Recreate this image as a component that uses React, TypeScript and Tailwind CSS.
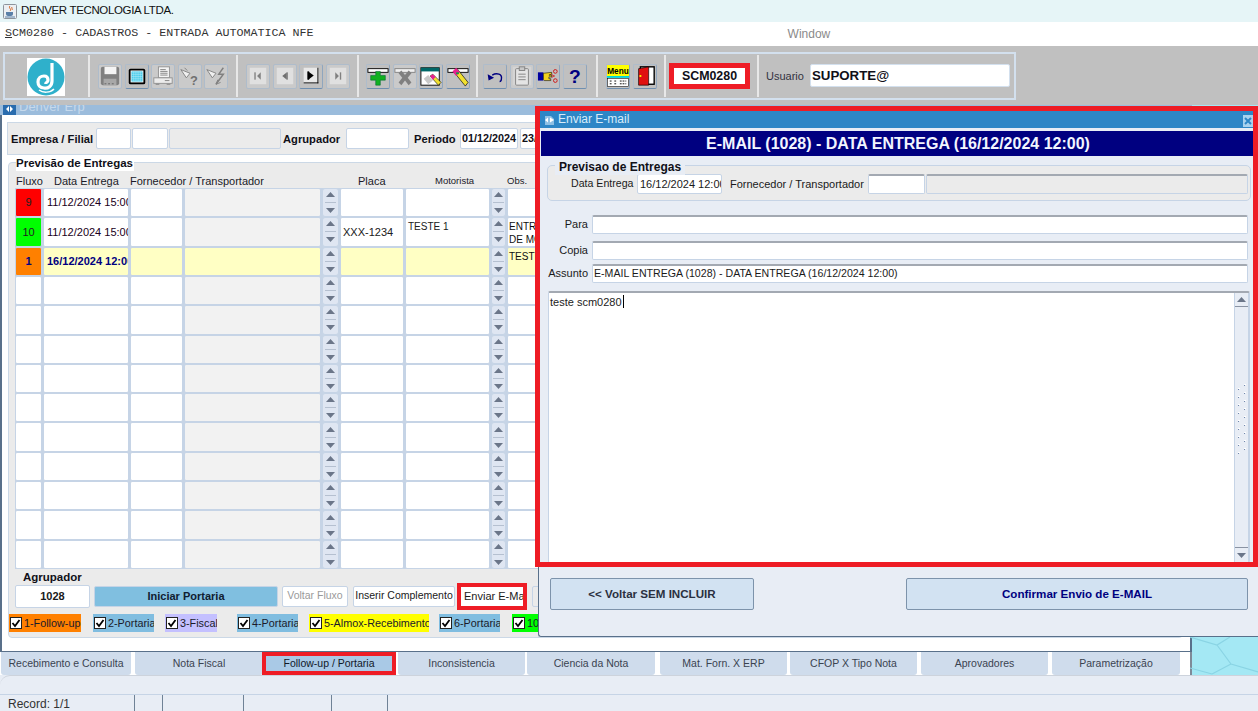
import { ReactNode } from "react";

type IconName =
  | "save" | "monitor" | "print" | "help" | "bolt"
  | "first" | "prev" | "next" | "last"
  | "plus" | "cross" | "win" | "pencil"
  | "undo" | "clip" | "hand" | "question" | "menu" | "door";

const icons: Record<IconName, ReactNode> = {
  save: (
    <>
      <rect x="2" y="2" width="20" height="20" rx="2" fill="#808080" />
      <rect x="6" y="2" width="13" height="8" fill="#f4f4f4" />
      <rect x="5" y="15" width="14" height="7" fill="#a8a8a8" />
      <path d="M6 20.5h2M10 20.5h2M14 20.5h2" stroke="#606060" />
    </>
  ),
  monitor: (
    <>
      <rect x="3" y="4" width="18" height="17" rx="2" fill="#000" />
      <rect x="5" y="6" width="14" height="13" fill="#fff" />
      <rect x="6" y="7" width="12" height="11" fill="#30c4e8" />
      <path d="M6 8.5h12M6 10.5h12M6 12.5h12M6 14.5h12M6 16.5h12M8 7v11M10 7v11M12 7v11M14 7v11M16 7v11" stroke="#b8ecf8" strokeWidth="0.6" />
    </>
  ),
  print: (
    <>
      <rect x="7" y="2" width="12" height="12" fill="#f4f4f4" stroke="#909090" />
      <path d="M9 5h6M9 7h8M9 9h8M9 11h8" stroke="#808080" />
      <rect x="2" y="14" width="20" height="6" fill="#ececec" stroke="#909090" />
      <path d="M14 17h5" stroke="#808080" />
      <path d="M4 21h4M16 21h4" stroke="#808080" />
    </>
  ),
  help: (
    <>
      <path d="M2 5l10 4-4 5z" fill="#f0f0f0" stroke="#808080" />
      <path d="M6 3l3 3" stroke="#808080" />
      <text x="12" y="22" fontSize="14" fontWeight="700" fill="#707070" fontFamily="Liberation Sans, sans-serif">?</text>
    </>
  ),
  bolt: (
    <>
      <path d="M2 5l10 4-4 5z" fill="#f0f0f0" stroke="#808080" />
      <path d="M20 3l-5 7h5l-8 11" fill="none" stroke="#808080" strokeWidth="1.6" />
      <path d="M14 16l-2 5 5-2" fill="none" stroke="#808080" />
    </>
  ),
  first: (
    <>
      <rect x="3" y="3" width="18" height="18" fill="#e0e0e0" />
      <rect x="8" y="8" width="1.5" height="8" fill="#808080" />
      <path d="M15 8v8l-4-4z" fill="#808080" />
    </>
  ),
  prev: (
    <>
      <rect x="3" y="3" width="18" height="18" fill="#e0e0e0" />
      <path d="M14 8v8l-5-4z" fill="#707070" />
      <rect x="14" y="8" width="1" height="8" fill="#707070" />
    </>
  ),
  next: (
    <>
      <rect x="4" y="3" width="16" height="17" fill="#e8e8e8" />
      <path d="M9 7v9l6-4.5z" fill="#000" />
      <rect x="8" y="7" width="2" height="9" fill="#000" />
      <path d="M4 19.5h16M19.5 3v17" stroke="#000" />
    </>
  ),
  last: (
    <>
      <rect x="3" y="3" width="18" height="18" fill="#e0e0e0" />
      <path d="M9 8v8l4-4z" fill="#808080" />
      <rect x="14" y="8" width="1.5" height="8" fill="#808080" />
    </>
  ),
  plus: (
    <>
      <rect x="1" y="4" width="22" height="4" fill="#fff" stroke="#000" />
      <path d="M9.5 7h5v4.5H20v5h-5.500V22h-5v-5.500H4v-5h5.500z" fill="#10b020" stroke="#063" strokeWidth="0.6" />
    </>
  ),
  cross: (
    <>
      <rect x="1" y="4" width="22" height="4" fill="#f0f0f0" stroke="#808080" />
      <path d="M5 9l3-3 4 5 4-5 3 3-4 5 4 5-3 3-4-5-4 5-3-3 4-5z" fill="#808080" />
    </>
  ),
  win: (
    <>
      <rect x="1" y="3" width="20" height="19" fill="#fff" stroke="#000" />
      <rect x="1" y="3" width="20" height="4" fill="#006868" />
      <path d="M4 15l5-4 5 6-5 4z" fill="#c8c8c8" />
      <path d="M11 12l3-2 9 9-3 3z" fill="#f0e030" stroke="#000" strokeWidth="0.6" />
      <path d="M11 12l3-2 3 3-3 3z" fill="#e82090" />
    </>
  ),
  pencil: (
    <>
      <rect x="1" y="4" width="22" height="4" fill="#fff" stroke="#000" />
      <path d="M7 7l4-3 12 15-3 4z" fill="#f0e030" stroke="#000" strokeWidth="0.7" />
      <path d="M6 7l4-4 4 5-4 4z" fill="#e82090" />
      <rect x="10" y="8" width="3" height="2" fill="#10a040" />
    </>
  ),
  undo: (
    <>
      <path d="M9 11c5-3 11-1 10 4 0 2-1 3-2 3" fill="none" stroke="#000080" strokeWidth="1.5" />
      <path d="M4 10l1 7 6-3z" fill="#000080" />
    </>
  ),
  clip: (
    <>
      <rect x="2" y="2" width="20" height="20" fill="#d4d4d4" />
      <rect x="5" y="4" width="14" height="18" rx="1" fill="#e4e4e4" stroke="#808080" />
      <rect x="9" y="2" width="6" height="4" fill="#c8c8c8" stroke="#808080" />
      <path d="M8 10h8M8 13h8M8 16h8" stroke="#808080" />
    </>
  ),
  hand: (
    <>
      <rect x="1" y="8" width="6" height="9" fill="#0000a0" />
      <path d="M7 9l9-1v2l-3 1h3v2h-3v2h2v2H8l-1-1z" fill="#f0d020" stroke="#000" strokeWidth="0.6" />
      <circle cx="20" cy="7" r="2" fill="none" stroke="#d01010" />
      <circle cx="20" cy="17" r="2" fill="none" stroke="#d01010" />
      <path d="M16 10l3 3M16 14l3-3" stroke="#d01010" />
    </>
  ),
  question: (
    <text x="12" y="20" textAnchor="middle" fontSize="21" fontWeight="700" fill="#000080" fontFamily="Liberation Sans, sans-serif">?</text>
  ),
  menu: (
    <>
      <rect x="0" y="0" width="24" height="12" fill="#ffff00" />
      <text x="12" y="10" textAnchor="middle" fontSize="9" fontWeight="700" fill="#000" fontFamily="Liberation Sans, sans-serif">Menu</text>
      <rect x="0" y="12" width="24" height="2" fill="#00d8d8" />
      <rect x="0.5" y="14.500" width="23" height="9" fill="#fff" stroke="#000" strokeWidth="0.6" />
      <path d="M3 17.500h3M8 17.500h3M14 17.500h7M3 20.500h3M8 20.500h3M14 20.500h7" stroke="#000" strokeDasharray="2 1" />
    </>
  ),
  door: (
    <>
      <rect x="7" y="2" width="15" height="19" fill="#fff" stroke="#000" strokeWidth="1.5" />
      <path d="M5 4l11-2v20H5z" fill="#e01010" stroke="#000" strokeWidth="0.7" />
      <rect x="6" y="11" width="2" height="2" fill="#ffff00" />
    </>
  ),
};

function ToolButton({ icon, off }: { icon: IconName; off?: boolean }) {
  return (
    <div
      className={
        off
          ? "flex h-[25px] w-[24px] shrink-0 items-center justify-center rounded-[2px] border border-[#aebccb] bg-[#cacaca]"
          : "flex h-[25px] w-[24px] shrink-0 items-center justify-center rounded-[2px] border border-[#aebccb] border-b-[#6f8fb0] border-r-[#8fa6be] bg-[#c0c0c0]"
      }
    >
      <svg viewBox="0 0 24 24" className="h-[22px] w-[22px]">
        {icons[icon]}
      </svg>
    </div>
  );
}

function ToolGroup({ className, items }: { className: string; items: [IconName, boolean?][] }) {
  return (
    <div className={"flex h-full shrink-0 items-center gap-[2.5px] border-r-2 border-[#e8e8e8] " + className}>
      {items.map(([icon, off]) => (
        <ToolButton key={icon} icon={icon} off={off} />
      ))}
    </div>
  );
}

function Field({ className, children }: { className: string; children?: ReactNode }) {
  return (
    <div className={"flex shrink-0 items-center overflow-hidden whitespace-nowrap rounded-[2px] border border-[#c6d4e6] " + className}>
      {children}
    </div>
  );
}

function SunkenField({ className, children }: { className: string; children?: ReactNode }) {
  return (
    <div className={"flex items-center overflow-hidden whitespace-nowrap rounded-[2px] border border-[#c6d4e6] border-t-2 border-t-[#a3a9b2] " + className}>
      {children}
    </div>
  );
}

function Arrow({ up }: { up?: boolean }) {
  return (
    <svg viewBox="0 0 9 5" className="h-[5px] w-[9px]">
      <path d={up ? "M0 5L4.5 0L9 5z" : "M0 0L9 0L4.5 5z"} fill="#6b7689" />
    </svg>
  );
}

function Spinner() {
  return (
    <div className="flex h-full flex-col items-center justify-center gap-[5px] rounded-[3px] border border-[#c6d4e6] bg-[#dfe6f2]">
      <Arrow up />
      <div className="h-px w-[11px] bg-[#b5c0d0]" />
      <Arrow />
    </div>
  );
}

type Row = {
  flow?: string;
  flowColor?: string;
  date?: string;
  placa?: string;
  driver?: string;
  obs?: string;
  active?: boolean;
};

const rows: Row[] = [
  { flow: "9", flowColor: "bg-[#ff0000]", date: "11/12/2024 15:00" },
  { flow: "10", flowColor: "bg-[#00ff00]", date: "11/12/2024 15:00", placa: "XXX-1234", driver: "TESTE 1", obs: "ENTREGA\nDE MOVEIS" },
  { flow: "1", flowColor: "bg-[#ff8000]", date: "16/12/2024 12:00", obs: "TESTE", active: true },
  {}, {}, {}, {}, {}, {}, {}, {}, {}, {},
];

function GridRow({ row }: { row: Row }) {
  const fill = row.active ? "bg-[#ffffc4]" : "bg-white";
  const cell = "h-full overflow-hidden whitespace-nowrap rounded-[2px] border border-[#c6d4e6] ";
  return (
    <>
      <div className={cell + "flex items-center justify-center text-[11px] " + (row.flowColor ?? "bg-white") + (row.active ? " font-bold text-[#000080]" : " text-[#202020]")}>
        {row.flow}
      </div>
      <div className={cell + "flex items-center pl-[3px] text-[11px] " + fill + (row.active ? " font-bold text-[#000080]" : " text-[#200020]")}>
        {row.date}
      </div>
      <div className={cell + fill} />
      <div className={cell + (row.active ? "bg-[#ffffc4]" : "bg-[#f2f2f2]")} />
      <Spinner />
      <div className={cell + "flex items-center pl-[2px] text-[11px] text-[#202020] " + fill}>{row.placa}</div>
      <div className={cell + "pl-[2px] pt-[2px] text-[10px] leading-[13px] text-[#202020] " + fill}>{row.driver}</div>
      <Spinner />
      <div className={cell + "whitespace-pre pl-[1px] pt-[2px] text-[10px] leading-[13px] text-[#101010] " + fill}>{row.obs}</div>
    </>
  );
}

const flags = [
  { label: "1-Follow-up", className: "w-[72px] bg-[#ff8000]" },
  { label: "2-Portaria", className: "ml-[12px] w-[61px] bg-[#80bde0]" },
  { label: "3-Fiscal", className: "ml-[11px] w-[52px] bg-[#c4c0ff]" },
  { label: "4-Portaria", className: "ml-[20px] w-[61px] bg-[#80bde0]" },
  { label: "5-Almox-Recebimento", className: "ml-[11px] w-[120px] bg-[#ffff00]" },
  { label: "6-Portaria", className: "ml-[10px] w-[61px] bg-[#80bde0]" },
  { label: "10-Finalizado", className: "ml-[12px] w-[80px] bg-[#00ff00]" },
];

const tabs = [
  { label: "Recebimento e Consulta", className: "ml-[1px] w-[130px]" },
  { label: "Nota Fiscal", className: "ml-[4px] w-[128px]" },
  { label: "Follow-up / Portaria", className: "ml-[-1px] w-[134px] border-[4px] border-[#ee1c25] bg-[#a9c9e6] text-[#101828]", active: true },
  { label: "Inconsistencia", className: "ml-[2px] w-[127px]" },
  { label: "Ciencia da Nota", className: "ml-[2px] w-[128px]" },
  { label: "Mat. Forn. X ERP", className: "ml-[5px] w-[127px]" },
  { label: "CFOP X Tipo Nota", className: "ml-[3px] w-[127px]" },
  { label: "Aprovadores", className: "ml-[4px] w-[127px]" },
  { label: "Parametrização", className: "ml-[4px] w-[128px]" },
];

function Check({ className, label }: { className: string; label: string }) {
  return (
    <div className={"flex h-[18px] shrink-0 items-center gap-[1px] overflow-hidden whitespace-nowrap pl-px text-[10.8px] text-[#1a1a2a] " + className}>
      <svg viewBox="0 0 12 12" className="h-[12px] w-[12px] shrink-0">
        <rect x="0.5" y="0.5" width="11" height="11" fill="#fff" stroke="#222" />
        <path d="M2.5 6l2.5 3 4.5-6" fill="none" stroke="#000" strokeWidth="1.8" />
      </svg>
      <span className="pl-px">{label}</span>
    </div>
  );
}

function Grip() {
  const rowsY = [0, 8, 16, 24, 32, 40, 48, 56, 64];
  return (
    <svg viewBox="0 0 9 70" className="h-[70px] w-[9px]">
      {rowsY.map((y) => (
        <g key={y}>
          <rect x="7" y={y} width="2" height="1" fill="#fff" />
          <rect x="7" y={y + 1} width="1" height="1" fill="#6f86ac" />
          <rect x="1" y={y + 4} width="2" height="1" fill="#fff" />
          <rect x="1" y={y + 5} width="1" height="1" fill="#6f86ac" />
        </g>
      ))}
    </svg>
  );
}

export default function App() {
  return (
    <div className="flex h-[711px] w-[1258px] flex-col overflow-hidden bg-[#e8edf5] font-['Liberation_Sans',Arial,sans-serif] text-[11px] text-[#1a1a1a]">
      {/* java frame title */}
      <div className="flex h-[22px] shrink-0 items-center gap-[4px] bg-[#e6f5f7] pl-[3px]">
        <svg viewBox="0 0 14 15" className="h-[15px] w-[14px]">
          <rect x="0.5" y="0.5" width="13" height="14" rx="1" fill="#eceff2" stroke="#8c949c" />
          <path d="M7 2c-2 2 2 3 0 5M9 3c-1 1 1 2 0 3" fill="none" stroke="#d86018" />
          <path d="M3 8h7v2c0 1-1 2-2 2H5c-1 0-2-1-2-2z" fill="#5a80a8" />
          <path d="M2 13h10" stroke="#5a80a8" />
        </svg>
        <span className="text-[11.5px] tracking-[-0.35px] text-[#111]">DENVER TECNOLOGIA LTDA.</span>
      </div>

      {/* menu bar */}
      <div className="relative flex h-[24px] shrink-0 items-center bg-white pl-[5px] font-['Liberation_Mono',monospace] text-[11.7px] text-[#333]">
        <span>
          <span className="underline">S</span>CM0280 - CADASTROS - ENTRADA AUTOMATICA NFE
        </span>
        <span className="ml-[474px] font-['Liberation_Sans',sans-serif] text-[12px] text-[#8a8a8a]">Window</span>
      </div>

      {/* toolbar */}
      <div className="relative z-10 h-[59px] shrink-0 bg-[#c0c0c0] pl-[3px] pt-[6px]">
        <div className="flex h-[48px] w-[1013px] items-center border-2 border-[#d3e0ee] py-[1px]">
          <div className="flex h-full w-[85px] shrink-0 items-start border-r-2 border-[#e8e8e8] pl-[22px]">
            <div className="mt-[3px] h-[38px] w-[38px] bg-white">
              <svg viewBox="0 0 38 38" className="h-[38px] w-[38px]">
                <circle cx="19" cy="19" r="18.5" fill="#2fb0cb" />
                <path d="M25 5v18c0 5-4 8-8 7-4 0-6-3-6-6 0-4 3-6 6-6 3 0 4 2 4 4 0 2-2 3-3 2" fill="none" stroke="#fff" strokeWidth="3.2" />
                <path d="M12 32c4 3 11 3 15-1" fill="none" stroke="#fff" strokeWidth="1.5" />
              </svg>
            </div>
          </div>
          <ToolGroup className="w-[148px] pl-[8px]" items={[["save", true], ["monitor"], ["print", true], ["help", true], ["bolt", true]]} />
          <ToolGroup className="w-[121px] pl-[8px]" items={[["first", true], ["prev", true], ["next"], ["last", true]]} />
          <ToolGroup className="w-[119px] pl-[7px]" items={[["plus"], ["cross", true], ["win"], ["pencil"]]} />
          <ToolGroup className="w-[120px] pl-[5px]" items={[["undo"], ["clip", true], ["hand"], ["question"]]} />
          <ToolGroup className="w-[68px] pl-[8px]" items={[["menu"], ["door"]]} />
          <div className="flex h-full w-[93px] shrink-0 items-center border-r-2 border-[#e8e8e8] pl-[3px]">
            <div className="flex h-[26px] w-[81px] items-center justify-center border-[5px] border-[#ee1c25] bg-white text-[12.4px] font-bold text-[#101018]">
              SCM0280
            </div>
          </div>
          <span className="ml-[7px] text-[11px] text-[#333340]">Usuario</span>
          <div className="ml-[6px] mt-[-1px] flex h-[23px] w-[200px] items-center rounded-[2px] border border-[#d3e0ee] bg-white pl-[1px] text-[13.3px] font-bold text-[#101018]">
            SUPORTE@
          </div>
        </div>
      </div>

      {/* mdi desktop */}
      <div className="relative h-[570px] shrink-0 overflow-hidden bg-[#a4e8f4]">
        <svg viewBox="0 0 68 45" className="absolute left-[1190px] top-[525px] h-[45px] w-[68px]">
          <path d="M0 7l27 8 13-8M27 15l14 19 27 8M41 34l-19 10M0 38l22 6" fill="none" stroke="#8ad4e4" strokeWidth="1.2" />
        </svg>

        {/* main form window */}
        <div className="flex h-[570px] w-[1192px] flex-col overflow-hidden">
          <div className="flex h-[10px] shrink-0 items-start overflow-hidden bg-[#9bbcdc] pl-[3px]">
            <svg viewBox="0 0 13 10" className="h-[10px] w-[13px]">
              <rect width="13" height="10" fill="#2a6cae" />
              <path d="M3 4l3-3v6zM10 4L7 1v6z" fill="#fff" />
            </svg>
            <span className="ml-[3px] mt-[-6px] text-[13px] leading-[16px] text-[#c6d9ec]">Denver Erp</span>
          </div>

          <div className="flex h-[537px] shrink-0 flex-col border-x-2 border-b border-[#59708a] bg-white pl-[5px] pt-[7px]">
            <div className="flex h-[33px] w-[1176px] shrink-0 items-center border border-[#cbd8e6] bg-[#ebebeb] pl-[3px] font-bold text-[#101018]">
              <span className="w-[82px] whitespace-nowrap pt-px text-[11.2px]">Empresa / Filial</span>
              <Field className="ml-[3px] h-[21px] w-[35px] bg-white" />
              <Field className="ml-[1px] h-[21px] w-[36px] bg-white" />
              <Field className="ml-[1px] h-[21px] w-[112px] bg-[#ebebeb]" />
              <span className="ml-[2px] w-[59px] whitespace-nowrap pt-px text-[11.2px]">Agrupador</span>
              <Field className="ml-[4px] h-[21px] w-[63px] bg-white" />
              <span className="ml-[5px] w-[42px] pt-px text-[11.2px]">Periodo</span>
              <Field className="ml-[4px] h-[21px] w-[58px] justify-center bg-white text-[10.8px]">01/12/2024</Field>
              <Field className="ml-[2px] h-[21px] w-[60px] bg-white pl-[1px] text-[10.8px]">23/12/2024</Field>
            </div>

            <div className="relative ml-[1px] mt-[7px] flex h-[476px] w-[1175px] shrink-0 flex-col rounded-[4px] border border-[#cbd8e6] bg-[#ebebeb] pl-[6px] pt-[11px]">
              <div className="absolute left-[7px] top-[-8px] bg-white pr-[1px] text-[11.5px] font-bold leading-[16px] text-[#101018]">
                Previsão de Entregas
              </div>

              <div className="grid h-[14px] shrink-0 grid-cols-[27px_86px_53px_137px_17px_64px_85px_15px_1fr] items-center gap-x-px whitespace-nowrap text-[11px] leading-[14px] text-[#1a1a28]">
                <span className="pl-[1px]">Fluxo</span>
                <span className="pl-[11px]">Data Entrega</span>
                <span className="col-span-2">Fornecedor / Transportador</span>
                <span />
                <span className="pl-[18px]">Placa</span>
                <span className="pl-[30px] text-[9.5px]">Motorista</span>
                <span />
                <span className="text-[9.5px]">Obs.</span>
              </div>

              <div className="grid h-[381px] shrink-0 grid-cols-[27px_86px_53px_137px_17px_64px_85px_15px_1fr] grid-rows-[repeat(13,1fr)] gap-x-px bg-[#c6d4e6]">
                {rows.map((row, i) => (
                  <GridRow key={i} row={row} />
                ))}
              </div>

              <div className="h-[15px] shrink-0 pl-[8px] text-[11.5px] font-bold leading-[17px] text-[#101018]">Agrupador</div>

              <div className="flex h-[24px] shrink-0 items-center text-[11px]">
                <Field className="h-[23px] w-[75px] justify-center bg-white font-bold">1028</Field>
                <Field className="ml-[4px] h-[21px] w-[184px] justify-center bg-[#80bfe0] font-bold text-[#102030]">Iniciar Portaria</Field>
                <Field className="ml-[4px] h-[21px] w-[66px] justify-center bg-white text-[10.5px] text-[#9a9a9a]">Voltar Fluxo</Field>
                <Field className="ml-[5px] h-[21px] w-[102px] justify-center bg-white text-[10.5px]">Inserir Complemento</Field>
                <div className="ml-[2px] flex h-[27px] w-[70px] shrink-0 items-center overflow-hidden whitespace-nowrap border-[4px] border-[#ee1c25] bg-white pl-[3px]">
                  Enviar E-Mail
                </div>
                <Field className="ml-[5px] h-[21px] w-[70px] bg-[#ebebeb]" />
              </div>

              <div className="ml-[-6px] mt-[6px] flex shrink-0 items-center">
                {flags.map((f) => (
                  <Check key={f.label} className={f.className} label={f.label} />
                ))}
              </div>
            </div>
          </div>

          <div className="flex h-[23px] shrink-0 border-r-2 border-[#7f8a98] bg-white">
            {tabs.map((t) => (
              <div
                key={t.label}
                className={
                  t.active
                    ? "flex shrink-0 items-center justify-center whitespace-nowrap text-[10.5px] " + t.className
                    : "flex shrink-0 items-center justify-center whitespace-nowrap rounded-b-[3px] bg-[#cfdcec] text-[10.5px] text-[#3a4350] " + t.className
                }
              >
                {t.label}
              </div>
            ))}
          </div>
        </div>

        {/* enviar e-mail dialog */}
        <div className="absolute left-[538px] top-[3px] flex h-[529px] w-[720px] flex-col rounded-bl-[3px] border-b border-l border-[#59708a] bg-[#e8edf5]">
          <div className="flex h-[20px] shrink-0 items-end justify-between bg-[#2e86c6] pb-[1px] pl-[5px] pr-[5px] text-[12px] text-[#d8ecfa]">
            <div className="flex items-center gap-[3px]">
              <svg viewBox="0 0 11 12" className="h-[12px] w-[11px]">
                <path d="M1 2h6l3 3v6H1z" fill="#8fc0e4" />
                <path d="M1 6l3-2.500v5zM10 6L6 3.500v5z" fill="#fff" />
              </svg>
              <span className="leading-[15px]">Enviar E-mail</span>
            </div>
            <svg viewBox="0 0 10 12" className="h-[12px] w-[10px]">
              <rect width="10" height="12" fill="#a9d2ee" />
              <path d="M2 3l6 6M8 3l-6 6" stroke="#2e86c6" strokeWidth="2" />
            </svg>
          </div>
          <div className="ml-[2px] mt-[3px] flex h-[25px] shrink-0 items-center justify-center bg-[#000080] pr-[3px] pt-[1px] text-[16px] font-bold text-[#f2f5ff]">
            E-MAIL (1028) - DATA ENTREGA (16/12/2024 12:00)
          </div>

          <div className="relative ml-[8px] mr-[7px] mt-[9px] flex h-[36px] shrink-0 items-center rounded-[5px] border border-[#c6d4e6] bg-[#ebebeb] pl-[23px] pt-[2px]">
            <div className="absolute left-[7px] top-[-7px] bg-[#e8edf5] pl-[4px] pr-[4px] text-[12px] font-bold leading-[16px] text-[#101018]">
              Previsao de Entregas
            </div>
            <span className="w-[62px] whitespace-nowrap text-[10.6px]">Data Entrega</span>
            <Field className="ml-[4px] h-[20px] w-[85px] bg-white pl-[2px] text-[11px]">16/12/2024 12:00</Field>
            <span className="ml-[8px] w-[134px] whitespace-nowrap">Fornecedor / Transportador</span>
            <SunkenField className="ml-[4px] h-[20px] w-[57px] bg-white" />
            <SunkenField className="ml-px h-[20px] w-[322px] bg-[#ebebeb]" />
          </div>

          <div className="mt-[14px] grid shrink-0 grid-cols-[41px_1fr] items-center gap-x-[4px] pl-[8px] pr-[10px]">
            <span className="text-right">Para</span>
            <SunkenField className="h-[19px] bg-white" />
            <span className="mt-[7px] text-right">Copia</span>
            <SunkenField className="mt-[7px] h-[19px] bg-white" />
            <span className="mt-[4px] text-right">Assunto</span>
            <SunkenField className="mt-[4px] h-[19px] bg-white pl-[1px] text-[10.6px]">
              E-MAIL ENTREGA (1028) - DATA ENTREGA (16/12/2024 12:00)
            </SunkenField>
          </div>

          <div className="ml-[9px] mr-[8px] mt-[8px] flex h-[272px] shrink-0 rounded-[2px] border border-[#c6d4e6] border-t-2 border-t-[#a3a9b2] bg-white">
            <div className="flex-1 pl-[1px] text-[11px] leading-[15px] text-[#222]">
              teste scm0280<span className="ml-[1px] inline-block h-[13px] w-px translate-y-[2px] bg-black" />
            </div>
            <div className="flex w-[15px] shrink-0 flex-col border-x border-[#c6d4e6] bg-[#e8edf5]">
              <div className="flex h-[14px] shrink-0 items-center justify-center border-b border-[#8a93a3]">
                <Arrow up />
              </div>
              <div className="flex flex-1 flex-col items-center pt-[77px]">
                <Grip />
              </div>
              <div className="flex h-[15px] shrink-0 items-center justify-center border-t border-[#8a93a3]">
                <Arrow />
              </div>
            </div>
          </div>

          <div className="ml-[11px] mr-[10px] mt-[15px] flex h-[33px] shrink-0 justify-between pb-px text-[11.6px] font-bold">
            <div className="flex w-[204px] items-center justify-center rounded-[2px] border border-[#7d93ab] bg-[#d2e2f2] text-[#2a3040]">
              {"<< Voltar SEM INCLUIR"}
            </div>
            <div className="flex w-[342px] items-center justify-center rounded-[2px] border border-[#7d93ab] bg-[#d2e2f2] text-[#000080]">
              Confirmar Envio de E-MAIL
            </div>
          </div>
        </div>

        {/* red highlight drawn over the dialog */}
        <div className="pointer-events-none absolute left-[535px] top-[1px] h-[461px] w-[723px] border-[5px] border-[#ee1c25]" />
      </div>

      {/* status bar */}
      <div className="flex h-[36px] shrink-0 flex-col rounded-tl-[10px] border-t border-[#cdd3dc] bg-[#e8edf5]">
        <div className="h-[19px] shrink-0 border-b border-[#c6d4e6]" />
        <div className="flex flex-1 items-center text-[12px] text-[#333]">
          <span className="w-[134px] pl-[8px]">Record: 1/1</span>
          <div className="h-full w-[28px] border-l border-[#6f8296]" />
          <div className="h-full w-[81px] border-l border-[#6f8296]" />
          <div className="h-full w-[88px] border-l border-[#6f8296]" />
          <div className="h-full w-[56px] border-l border-[#6f8296]" />
          <div className="h-full border-l border-[#6f8296]" />
        </div>
      </div>
    </div>
  );
}
